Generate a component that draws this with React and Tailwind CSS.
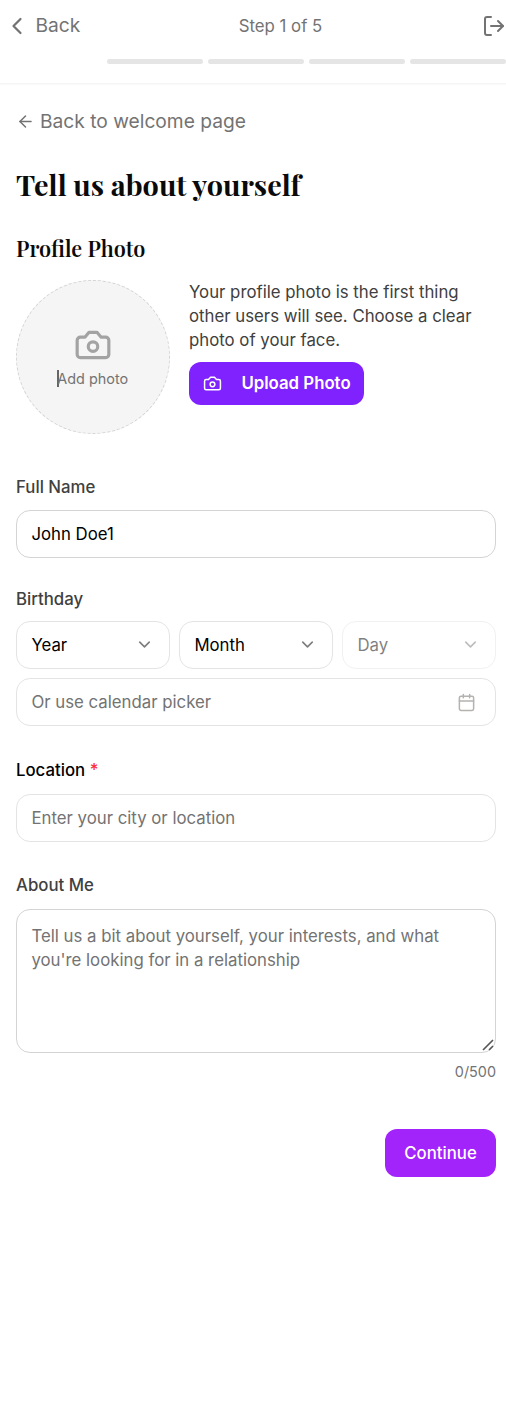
import React from "react";

const CameraIcon = ({ className, strokeWidth = 2 }) => (
  <svg viewBox="0 0 24 24" fill="none" stroke="currentColor" strokeWidth={strokeWidth} strokeLinecap="round" strokeLinejoin="round" className={className}>
    <path d="M14.5 4h-5L7 7H4a2 2 0 0 0-2 2v9a2 2 0 0 0 2 2h16a2 2 0 0 0 2-2V9a2 2 0 0 0-2-2h-3l-2.5-3z" />
    <circle cx="12" cy="13" r="3" />
  </svg>
);

const Icon = ({ className, strokeWidth = 2, children }) => (
  <svg viewBox="0 0 24 24" fill="none" stroke="currentColor" strokeWidth={strokeWidth} strokeLinecap="round" strokeLinejoin="round" className={className}>
    {children}
  </svg>
);

const Select = ({ label, disabled }) => (
  <div className={disabled ? "flex h-12 items-center justify-between rounded-[14px] border border-[#e4e4e4] pl-[14.4px] pr-[15px] opacity-50" : "flex h-12 items-center justify-between rounded-[14px] border border-[#e4e4e4] pl-[14.4px] pr-[15px]"}>
    <span className="pt-0.5 text-black">{label}</span>
    <Icon className="mb-0.5 size-[19px] text-[#7d7d7d]" strokeWidth={2}><path d="m6 9 6 6 6-6" /></Icon>
  </div>
);

export default function App() {
  return (
    <div className="h-[1426px] w-[506px] overflow-hidden bg-white font-['Inter',sans-serif] text-[16.8px] text-[#404040]">
      <header className="h-[84px] border-b border-[#f5f5f5] text-[#737373] shadow-[0_1px_1px_#fafafa]">
        <div className="flex h-[52px] items-center justify-between pl-[3px]">
          <div className="flex w-[168px] items-center gap-[4.4px]">
            <Icon className="size-7" strokeWidth={1.9}><path d="m15 18-6-6 6-6" /></Icon>
            <span className="pb-px text-[19.2px]">Back</span>
          </div>
          <span className="pt-px">Step 1 of 5</span>
          <div className="flex w-[116px] grow-0 justify-end">
            <Icon className="size-6"><path d="M9 21H5a2 2 0 0 1-2-2V5a2 2 0 0 1 2-2h4" /><path d="m16 17 5-5-5-5" /><path d="M21 12H9" /></Icon>
          </div>
        </div>
        <div className="mt-[7px] flex gap-[5px] pl-[107px]">
          {[2, 3, 4, 5].map((step) => <div key={step} className="h-[5px] flex-1 rounded-full bg-[#e5e5e5]" />)}
        </div>
      </header>

      <main className="pl-4 pr-[10px]">
        <div className="mt-[23px] flex h-7 items-center gap-[5px] text-[#737373]">
          <Icon className="size-[19px]" strokeWidth={1.9}><path d="m12 19-7-7 7-7" /><path d="M19 12H5" /></Icon>
          <span className="whitespace-nowrap text-[19.2px]">Back to welcome page</span>
        </div>
        <h1 className="mt-[29px] h-10 whitespace-nowrap font-['Playfair_Display','Liberation_Serif',serif] text-[28.8px] font-bold leading-10 text-[#0a0a0a]">Tell us about yourself</h1>
        <h2 className="mt-[28px] h-8 whitespace-nowrap font-['Playfair_Display','Liberation_Serif',serif] text-[21.6px] font-semibold leading-8 text-[#0a0a0a]">Profile Photo</h2>

        <div className="mt-[16px] flex gap-[19px]">
          <div className="flex size-[154px] shrink-0 flex-col items-center rounded-full border border-dashed border-[#d4d4d4] bg-[#f5f5f5] pt-[45px]">
            <CameraIcon className="size-[38px] text-[#a3a3a3]" />
            <div className="mt-1 flex h-[22px] items-center whitespace-nowrap text-[14.4px] text-[#737373]">
              <span className="-mt-px h-[17px] w-0.5 bg-[#666]" />
              <span className="-ml-[1.6px] pr-px">Add photo</span>
            </div>
          </div>
          <div>
            <p className="whitespace-nowrap leading-6">Your profile photo is the first thing<br />other users will see. Choose a clear<br />photo of your face.</p>
            <button className="mt-[10px] flex h-[43px] w-[175px] items-center justify-between rounded-xl bg-[#7f22fe] pl-[14px] pr-[13.4px] font-semibold text-white">
              <CameraIcon className="size-[19px]" strokeWidth={1.9} />
              <span className="whitespace-nowrap pt-px">Upload Photo</span>
            </button>
          </div>
        </div>

        <label className="mt-[41px] block h-6 font-medium leading-6">Full Name</label>
        <div className="mt-[11px] flex h-12 items-center rounded-[14px] border border-[#d4d4d4] px-[14.4px] pt-0.5 text-black">John Doe1</div>

        <label className="mt-[29px] block h-6 font-medium leading-6">Birthday</label>
        <div className="mt-[10px] grid grid-cols-3 gap-[9px]">
          <Select label="Year" />
          <Select label="Month" />
          <Select label="Day" disabled />
        </div>
        <div className="mt-[9px] flex h-12 items-center justify-between rounded-[14px] border border-[#e4e4e4] pl-[14.4px] pr-[19px] text-[#737373]">
          <span className="pt-0.5">Or use calendar picker</span>
          <Icon className="size-[19px] text-[#b5b2b0]" strokeWidth={1.9}><rect width="18" height="18" x="3" y="4" rx="2" /><path d="M8 2v4M16 2v4M3 10h18" /></Icon>
        </div>

        <label className="mt-8 block h-6 font-medium leading-6 text-black">Location <span className="text-[#fb2c36]">*</span></label>
        <div className="mt-3 flex h-12 items-center rounded-[14px] border border-[#e4e4e4] px-[14.4px] pt-0.5 text-[#737373]">Enter your city or location</div>

        <label className="mt-[31px] block h-6 font-medium leading-6">About Me</label>
        <div className="relative mt-3 h-36 rounded-[14px] border border-[#d4d4d4] px-[14.4px] pt-[14px] leading-6 text-[#737373]">
          <span className="whitespace-nowrap">Tell us a bit about yourself, your interests, and what<br />you're looking for in a relationship</span>
          <svg viewBox="0 0 12 12" className="absolute bottom-px right-px size-3" fill="none" stroke="#555" strokeWidth="1.6"><path d="M1 11 11 1M7 11l4-4" /></svg>
        </div>
        <div className="mt-[7px] text-right text-[14.4px] leading-6 text-[#737373]">0/500</div>
        <div className="mt-[45px] flex justify-end">
          <button className="flex h-12 w-[111px] items-center justify-center rounded-xl bg-[#a323fb] pt-0.5 font-medium text-white">Continue</button>
        </div>
      </main>
    </div>
  );
}
